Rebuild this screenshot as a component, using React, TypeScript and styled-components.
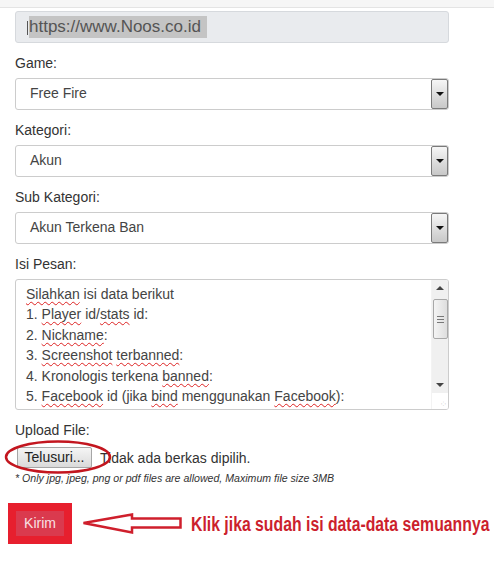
import React from "react";
import styled, { createGlobalStyle } from "styled-components";

const GlobalStyle = createGlobalStyle`
  html, body { margin: 0; padding: 0; background: #ffffff; overflow: hidden; }
  body { font-family: "Liberation Sans", Arial, sans-serif; color: #333; }
  * { box-sizing: border-box; }
`;

const Page = styled.div`
  width: 494px;
  min-height: 561px;
  background: #fff;
  overflow: hidden;
`;

const TopStrip = styled.div`
  height: 8px;
  background: #f6f6f6;
  border-bottom: 1px solid #e4e4e4;
`;

const Form = styled.div`
  padding: 3px 45px 0 15px;
`;

const ReadonlyField = styled.div`
  height: 32px;
  border: 1px solid #d6d9dd;
  border-radius: 3px;
  background: #e9ebee;
  display: flex;
  align-items: center;
  padding-left: 10px;
  overflow: hidden;
`;

const CutGlyph = styled.span`
  display: inline-block;
  width: 2px;
  height: 14px;
  margin-top: 2px;
  background: linear-gradient(#555, #555) no-repeat 1px 0 / 1px 100%;
`;

const Selected = styled.span`
  background: #c4c4c4;
  color: #555;
  font-size: 17px;
  line-height: 22px;
  padding-right: 6px;
  margin-left: 1px;
`;

const Label = styled.div`
  font-size: 14px;
  line-height: 20px;
  color: #333;
  margin: 10px 0 5px;
`;

const SelectBox = styled.div`
  height: 32px;
  border: 1px solid #ccc;
  border-radius: 3px;
  display: flex;
  align-items: stretch;
  background: #fff;
`;

const SelectValue = styled.div`
  flex: 1;
  padding-left: 14px;
  font-size: 14px;
  line-height: 29px;
  color: #444;
`;

const DropButton = styled.div`
  width: 17px;
  border: 1px solid #7a7a7a;
  border-radius: 2px;
  background: linear-gradient(#f6f6f6, #dcdcdc 55%, #c8c8c8);
  display: flex;
  justify-content: center;
  padding-top: 12px;
`;

const TriangleDown = styled.span`
  width: 0;
  height: 0;
  border-left: 4px solid transparent;
  border-right: 4px solid transparent;
  border-top: 4px solid #111;
`;

const TextArea = styled.div`
  height: 131px;
  border: 1px solid #ccc;
  border-radius: 3px;
  display: flex;
  overflow: hidden;
`;

const TextContent = styled.div`
  flex: 1;
  padding: 4px 0 0 10px;
  font-size: 14px;
  line-height: 20.4px;
  color: #444;
  white-space: nowrap;
  overflow: hidden;
`;

const Typo = styled.span`
  text-decoration: underline wavy #d22;
  text-decoration-thickness: 1px;
  text-underline-offset: 2px;
  text-decoration-skip-ink: none;
`;

const ScrollBar = styled.div`
  width: 17px;
  display: flex;
  flex-direction: column;
  background: #f0f0f0;
  border-left: 1px solid #f3f3f3;
`;

const ScrollArrow = styled.div<{ $up?: boolean }>`
  height: 16px;
  display: flex;
  align-items: center;
  justify-content: center;
  &::after {
    content: "";
    width: 0;
    height: 0;
    border-left: 4px solid transparent;
    border-right: 4px solid transparent;
    ${(p) => (p.$up ? "border-bottom: 4px solid #444;" : "border-top: 4px solid #444;")}
  }
`;

const Thumb = styled.div`
  height: 40px;
  margin: 3px 0 0 1px;
  border: 1px solid #a8a8a8;
  border-radius: 2px;
  background: linear-gradient(90deg, #f4f4f4, #dedede);
  display: flex;
  flex-direction: column;
  align-items: center;
  justify-content: center;
  gap: 2px;
`;

const GripLine = styled.span`
  width: 7px;
  height: 1px;
  background: #777;
`;

const Track = styled.div`
  flex: 1;
`;

const Corner = styled.div`
  height: 16px;
  background: #fff;
  display: flex;
  justify-content: flex-end;
  align-items: flex-end;
  padding: 0 2px 2px 0;
  color: #aaa;
  font-size: 6px;
  line-height: 6px;
`;

const FileRow = styled.div`
  position: relative;
  display: flex;
  align-items: center;
  height: 25px;
  padding-left: 2px;
`;

const BrowseButton = styled.div`
  height: 21px;
  width: 75px;
  border: 1px solid #a6a6a6;
  border-radius: 2px;
  background: linear-gradient(#f5f5f5, #dadada);
  font-size: 14px;
  line-height: 19px;
  text-align: center;
  color: #222;
`;

const FileText = styled.span`
  margin-left: 8px;
  font-size: 14px;
  color: #333;
`;

const Ellipse = styled.svg`
  position: absolute;
  left: -11px;
  top: -6px;
  pointer-events: none;
`;

const Note = styled.div`
  font-size: 10.6px;
  font-style: italic;
  color: #333;
  line-height: 13px;
  margin-top: 2px;
`;

const SubmitRow = styled.div`
  display: flex;
  align-items: center;
  margin: 18px 0 0 -7px;
`;

const Highlight = styled.div`
  background: #e71f2e;
  padding: 8px;
`;

const SubmitButton = styled.div`
  width: 48px;
  height: 25px;
  background: #da3a4e;
  color: #f7e1e4;
  font-size: 14px;
  line-height: 25px;
  text-align: center;
`;

const ArrowSvg = styled.svg`
  margin-left: 10px;
  flex: none;
`;

const CalloutBox = styled.div`
  margin-left: 8px;
  width: 302px;
  overflow: hidden;
  flex: none;
`;

const Callout = styled.span`
  display: inline-block;
  font-family: "Liberation Sans", Arial, sans-serif;
  font-weight: bold;
  font-size: 19.5px;
  line-height: 24px;
  color: #cc1f2d;
  white-space: nowrap;
  transform: scaleX(0.81);
  transform-origin: left center;
`;

const Select: React.FC<{ value: string }> = ({ value }) => (
  <SelectBox>
    <SelectValue>{value}</SelectValue>
    <DropButton>
      <TriangleDown />
    </DropButton>
  </SelectBox>
);

export default function App() {
  return (
    <Page>
      <GlobalStyle />
      <TopStrip />
      <Form>
        <ReadonlyField>
          <CutGlyph />
          <Selected>https://www.Noos.co.id</Selected>
        </ReadonlyField>

        <Label>Game:</Label>
        <Select value="Free Fire" />

        <Label>Kategori:</Label>
        <Select value="Akun" />

        <Label>Sub Kategori:</Label>
        <Select value="Akun Terkena Ban" />

        <Label>Isi Pesan:</Label>
        <TextArea>
          <TextContent>
            <div>
              <Typo>Silahkan</Typo> isi data berikut
            </div>
            <div>
              1. <Typo>Player</Typo> id/<Typo>stats</Typo> id:
            </div>
            <div>
              2. <Typo>Nickname</Typo>:
            </div>
            <div>
              3. <Typo>Screenshot</Typo> <Typo>terbanned</Typo>:
            </div>
            <div>
              4. Kronologis terkena <Typo>banned</Typo>:
            </div>
            <div>
              5. <Typo>Facebook</Typo> id (jika <Typo>bind</Typo> menggunakan <Typo>Facebook</Typo>):
            </div>
          </TextContent>
          <ScrollBar>
            <ScrollArrow $up />
            <Thumb>
              <GripLine />
              <GripLine />
              <GripLine />
            </Thumb>
            <Track />
            <ScrollArrow />
            <Corner>⁘</Corner>
          </ScrollBar>
        </TextArea>

        <Label>Upload File:</Label>
        <FileRow>
          <BrowseButton>Telusuri...</BrowseButton>
          <FileText>Tidak ada berkas dipilih.</FileText>
          <Ellipse width="108" height="36" viewBox="0 0 108 36">
            <ellipse cx="54" cy="18" rx="52" ry="15.5" fill="none" stroke="#c3161f" strokeWidth="2.5" />
          </Ellipse>
        </FileRow>
        <Note>* Only jpg, jpeg, png or pdf files are allowed, Maximum file size 3MB</Note>

        <SubmitRow>
          <Highlight>
            <SubmitButton>Kirim</SubmitButton>
          </Highlight>
          <ArrowSvg width="101" height="24" viewBox="0 0 101 24">
            <polygon
              points="1.5,11 50,2.5 50,6.5 98.5,6.5 98.5,15.5 50,15.5 50,20.5"
              fill="#fff"
              stroke="#cf1f2c"
              strokeWidth="2.5"
              strokeLinejoin="miter"
            />
          </ArrowSvg>
          <CalloutBox>
            <Callout>Klik jika sudah isi data-data semuannya</Callout>
          </CalloutBox>
        </SubmitRow>
      </Form>
    </Page>
  );
}
